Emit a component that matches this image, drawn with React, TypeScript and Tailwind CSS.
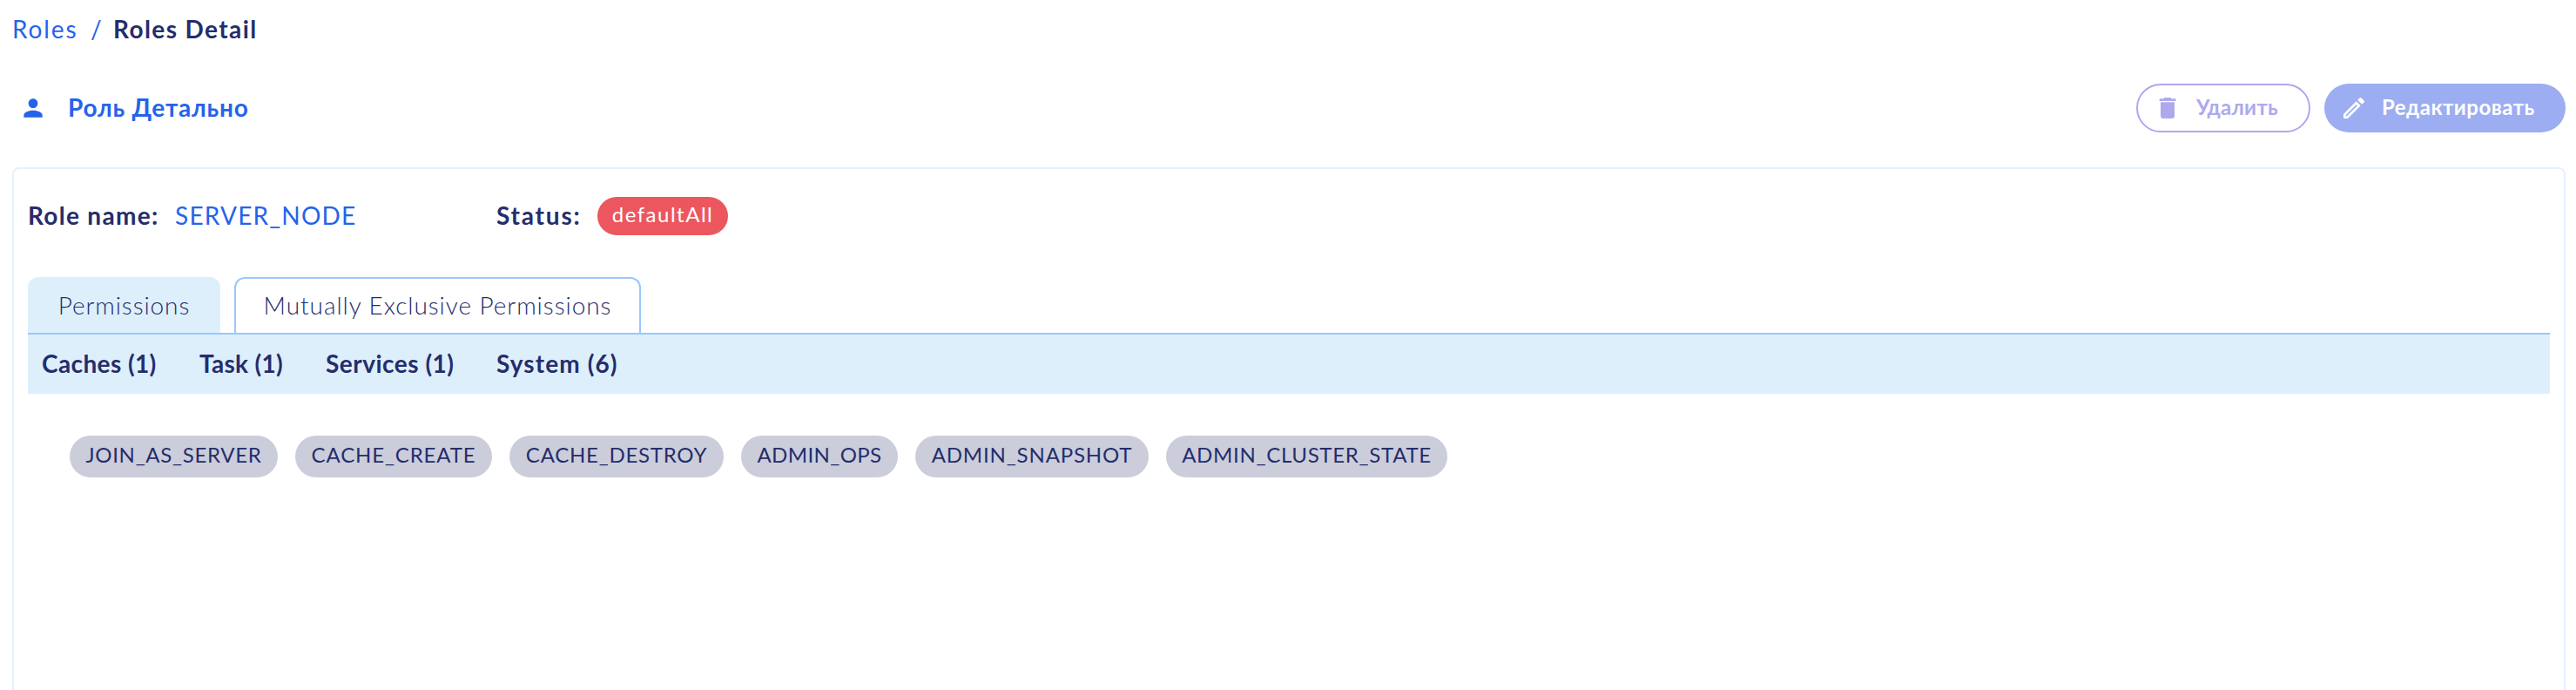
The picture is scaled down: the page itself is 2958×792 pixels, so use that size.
import { MdPerson, MdDelete, MdOutlineEdit } from "react-icons/md";

const categories = [
  { label: "Caches (1)", cls: "w-[181px] tracking-[0.4px]" },
  { label: "Task (1)", cls: "w-[145px] tracking-[0.3px]" },
  { label: "Services (1)", cls: "w-[196px] tracking-[0.5px]" },
  { label: "System (6)", cls: "w-[150px] tracking-[1.1px]" },
];

const permissions = [
  { label: "JOIN_AS_SERVER", cls: "w-[239px] tracking-[0.7px]" },
  { label: "CACHE_CREATE", cls: "w-[226px] tracking-[0.85px]" },
  { label: "CACHE_DESTROY", cls: "w-[246px] tracking-[0.75px]" },
  { label: "ADMIN_OPS", cls: "w-[180px] tracking-[0.4px]" },
  { label: "ADMIN_SNAPSHOT", cls: "w-[268px] tracking-[0.85px]" },
  { label: "ADMIN_CLUSTER_STATE", cls: "w-[323px] tracking-[0.7px]" },
];

export default function App() {
  return (
    <div className="flex h-[792px] flex-col overflow-hidden whitespace-nowrap bg-white pl-[14px] pr-3 font-['Lato','Noto_Sans',sans-serif] text-[28px] leading-10 text-[#252d6b]">
      <nav className="mt-[13px] flex h-10 items-center">
        <a className="w-[90px] tracking-[1.9px] text-[#2563eb]">Roles</a>
        <span className="w-[26px] text-[#2563eb]">/</span>
        <span className="font-bold tracking-[1.4px]">Roles Detail</span>
      </nav>

      <header className="mt-[43px] flex h-14 items-center">
        <MdPerson className="ml-2 size-8 text-[#2563eb]" />
        <h1 className="ml-6 pb-[3px] font-bold tracking-[0.8px] text-[#2563eb]">Роль Детально</h1>
        <div className="ml-auto flex gap-4 text-2xl font-bold">
          <button className="flex h-14 w-[200px] items-center rounded-full border-2 border-[#aea9ec] pl-[18px] text-[#aea9ec]">
            <MdDelete className="size-8" />
            <span className="ml-[17px] pb-[3px] tracking-[0.3px]">Удалить</span>
          </button>
          <button className="flex h-14 w-[277px] items-center rounded-full bg-[#9caef1] pl-[18px] text-white">
            <MdOutlineEdit className="size-8" />
            <span className="ml-4 pb-[3px] tracking-[0.5px]">Редактировать</span>
          </button>
        </div>
      </header>

      <main className="mt-10 h-[620px] shrink-0 rounded-lg border-2 border-[#e6f0ff] px-4">
        <div className="mt-8 flex h-11 items-center">
          <span className="w-[169px] pb-[3px] font-bold tracking-[1.3px]">Role name:</span>
          <span className="w-[369px] pb-[3px] tracking-[1.2px] text-[#2563eb]">SERVER_NODE</span>
          <span className="w-[116px] pb-[3px] font-bold tracking-[1.8px]">Status:</span>
          <span className="flex h-11 w-[150px] items-center justify-center rounded-full bg-[#ec575f] pb-1 text-2xl tracking-[1.5px] text-white">defaultAll</span>
        </div>

        <div className="mt-12 flex h-16 gap-4 font-light">
          <button className="w-[221px] rounded-t-xl bg-[#deeffc] pb-px tracking-[0.9px]">Permissions</button>
          <button className="w-[467px] rounded-t-xl border-2 border-b-0 border-[#99c8fc] pb-[3px] tracking-[0.94px]">Mutually Exclusive Permissions</button>
        </div>
        <div className="flex h-[70px] items-center border-t-2 border-[#99c8fc] bg-[#deeffc] pb-[3px] pl-4 font-bold">
          {categories.map((c) => (
            <span key={c.label} className={c.cls}>{c.label}</span>
          ))}
        </div>

        <div className="mt-12 flex gap-5 pl-12 text-2xl">
          {permissions.map((p) => (
            <span key={p.label} className={`flex h-12 items-center justify-center rounded-full bg-[#cccddb] pb-1 ${p.cls}`}>
              {p.label}
            </span>
          ))}
        </div>
      </main>
    </div>
  );
}
